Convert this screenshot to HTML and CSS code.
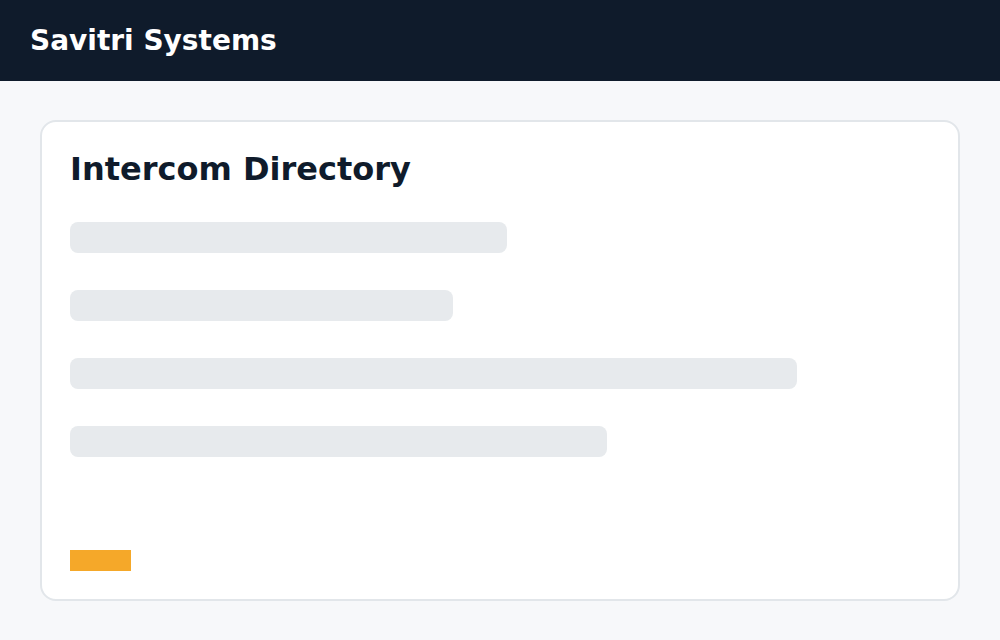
FILE: index.html
```html
<!DOCTYPE html>
<html>
<head>
<meta charset="utf-8">
<link rel="stylesheet" href="styles.css">
</head>
<body>
<header class="topbar"><span class="brand">Savitri Systems</span></header>
<main class="page">
  <section class="card">
    <h1 class="title">Intercom Directory</h1>
    <div class="rows">
      <div class="bar" style="width:437px"></div>
      <div class="bar" style="width:383px"></div>
      <div class="bar" style="width:727px"></div>
      <div class="bar" style="width:537px"></div>
    </div>
    <div class="accent"></div>
  </section>
</main>
</body>
</html>
```
FILE: styles.css
```css
html, body {
  margin: 0;
  padding: 0;
  background: #f7f8fa;
  font-family: "DejaVu Sans", sans-serif;
}
.topbar {
  height: 81px;
  background: #0f1b2b;
  display: flex;
  align-items: center;
  padding: 0 30px;
}
.brand {
  color: #ffffff;
  font-weight: bold;
  font-size: 28px;
}
.page {
  padding: 39px 40px 40px;
}
.card {
  box-sizing: border-box;
  height: 481px;
  background: #ffffff;
  border: 2px solid #e2e6ea;
  border-radius: 16px;
  padding: 29px 28px 28px;
  display: flex;
  flex-direction: column;
}
.title {
  margin: 0 0 34px 0;
  font-size: 32px;
  line-height: 37px;
  font-weight: bold;
  color: #0f1b2b;
}
.rows {
  display: flex;
  flex-direction: column;
  gap: 37px;
}
.bar {
  height: 31px;
  border-radius: 8px;
  background: #e7eaed;
}
.accent {
  margin-top: auto;
  width: 61px;
  height: 21px;
  background: #f5a829;
}
```
